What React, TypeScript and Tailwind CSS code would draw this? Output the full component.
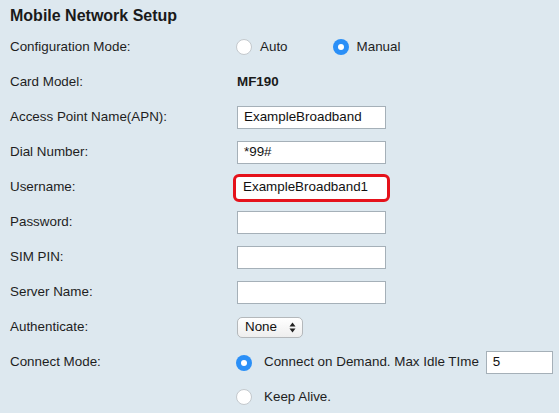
import React from 'react';

const font = { fontFamily: '"Liberation Sans", Arial, Helvetica, sans-serif' };

function Radio({ checked }: { checked?: boolean }) {
  return checked ? (
    <span className="flex h-[16px] w-[16px] shrink-0 items-center justify-center rounded-full bg-[#2a8ff7]">
      <span className="h-[6px] w-[6px] rounded-full bg-white" />
    </span>
  ) : (
    <span className="h-[16px] w-[16px] shrink-0 rounded-full border border-[#c4c9cd] bg-white" />
  );
}

function TextBox({ value, w = 'w-[149px]' }: { value?: string; w?: string }) {
  return (
    <div className={`${w} flex h-[23px] items-center border border-[#a5b0b8] bg-white pl-[6px] text-[13.4px] text-[#111]`}>
      {value}
    </div>
  );
}

function Row({ label, children }: { label: string; children?: React.ReactNode }) {
  return (
    <div className="flex h-[35px] items-center">
      <div className="w-[237px] shrink-0 pl-[10px] text-[13.4px] text-[#1e1e1e]">{label}</div>
      <div className="flex items-center">{children}</div>
    </div>
  );
}

export default function App() {
  return (
    <div className="h-[413px] w-[559px] overflow-hidden bg-[#dde8ef]" style={font}>
      <div className="flex h-[30px] items-center pl-[10px] pt-[1px] text-[16px] font-bold text-[#1a1a1a]">
        Mobile Network Setup
      </div>
      <Row label="Configuration Mode:">
        <div className="-ml-[1px] flex items-center">
          <Radio />
          <span className="ml-[8px] text-[13.4px] text-[#1e1e1e]">Auto</span>
          <span className="ml-[45px]">
            <Radio checked />
          </span>
          <span className="ml-[8px] text-[13.4px] text-[#1e1e1e]">Manual</span>
        </div>
      </Row>
      <Row label="Card Model:">
        <span className="text-[13.4px] font-bold text-[#1a1a1a]">MF190</span>
      </Row>
      <Row label="Access Point Name(APN):">
        <TextBox value="ExampleBroadband" />
      </Row>
      <Row label="Dial Number:">
        <TextBox value="*99#" />
      </Row>
      <Row label="Username:">
        <div className="-ml-[4px] flex h-[28px] w-[157px] items-center rounded-[6px] border-[3px] border-[#e5121b] bg-white pl-[7px] text-[13.4px] text-[#111]">
          ExampleBroadband1
        </div>
      </Row>
      <Row label="Password:">
        <TextBox />
      </Row>
      <Row label="SIM PIN:">
        <TextBox />
      </Row>
      <Row label="Server Name:">
        <TextBox />
      </Row>
      <Row label="Authenticate:">
        <div className="flex h-[21px] w-[66px] items-center justify-between rounded-[5px] border border-[#b4b8bb] bg-gradient-to-b from-white to-[#eeeeee] pl-[7px] pr-[6px] text-[13.4px] text-[#111]">
          <span>None</span>
          <svg width="7" height="11" viewBox="0 0 7 11">
            <path d="M3.5 0.5 L6.5 4.5 L0.5 4.5 Z" fill="#222" />
            <path d="M3.5 10.5 L6.5 6.5 L0.5 6.5 Z" fill="#222" />
          </svg>
        </div>
      </Row>
      <Row label="Connect Mode:">
        <div className="-ml-[1px] flex items-center">
          <Radio checked />
          <span className="ml-[12px] text-[13.4px] text-[#1e1e1e]">Connect on Demand. Max Idle TIme</span>
          <span className="ml-[7px]">
            <TextBox value="5" w="w-[67px]" />
          </span>
        </div>
      </Row>
      <Row label="">
        <div className="-ml-[1px] flex items-center">
          <Radio />
          <span className="ml-[12px] text-[13.4px] text-[#1e1e1e]">Keep Alive.</span>
        </div>
      </Row>
    </div>
  );
}
